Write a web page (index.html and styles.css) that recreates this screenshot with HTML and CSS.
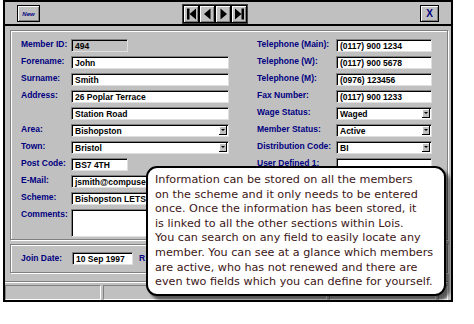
FILE: index.html
```html
<!DOCTYPE html>
<html lang="en">
<head>
  <meta charset="UTF-8" />
  <title>Members</title>
  <link rel="stylesheet" href="styles.css">
</head>
<body>

  <div class="window">
    <!-- Toolbar -->
    <div class="toolbar">
      <button class="btn btn-new">New</button>
      <div class="nav">
        <button class="btn nav-btn"><svg width="11" height="12" viewBox="0 0 11 12"><rect x="1" y="0.5" width="2.5" height="11" fill="#000"/><polygon points="10,0.5 10,11.5 3.5,6" fill="#000"/></svg></button>
        <button class="btn nav-btn"><svg width="11" height="12" viewBox="0 0 11 12"><polygon points="8.5,0.5 8.5,11.5 2,6" fill="#000"/></svg></button>
        <button class="btn nav-btn"><svg width="11" height="12" viewBox="0 0 11 12"><polygon points="2.5,0.5 2.5,11.5 9,6" fill="#000"/></svg></button>
        <button class="btn nav-btn"><svg width="11" height="12" viewBox="0 0 11 12"><polygon points="1,0.5 1,11.5 7.5,6" fill="#000"/><rect x="7.5" y="0.5" width="2.5" height="11" fill="#000"/></svg></button>
      </div>
      <button class="btn btn-close">X</button>
    </div>

    <div class="content">
      <!-- Member details -->
      <div class="panel main-panel">
        <div class="col col-left">
          <span class="label">Member ID:</span><span class="field readonly short">494</span>
          <span class="label">Forename:</span><span class="field">John</span>
          <span class="label">Surname:</span><span class="field">Smith</span>
          <span class="label">Address:</span><span class="field">26 Poplar Terrace</span>
          <span class="label"></span><span class="field">Station Road</span>
          <span class="label">Area:</span><span class="field select">Bishopston<span class="drop"></span></span>
          <span class="label">Town:</span><span class="field select">Bristol<span class="drop"></span></span>
          <span class="label">Post Code:</span><span class="field short">BS7 4TH</span>
          <span class="label">E-Mail:</span><span class="field mid">jsmith@compuserve.com</span>
          <span class="label">Scheme:</span><span class="field mid">Bishopston LETS</span>
          <span class="label">Comments:</span><span class="field memo"></span>
        </div>
        <div class="col col-right">
          <span class="label">Telephone (Main):</span><span class="field">(0117) 900 1234</span>
          <span class="label">Telephone (W):</span><span class="field">(0117) 900 5678</span>
          <span class="label">Telephone (M):</span><span class="field">(0976) 123456</span>
          <span class="label">Fax Number:</span><span class="field">(0117) 900 1233</span>
          <span class="label">Wage Status:</span><span class="field select">Waged<span class="drop"></span></span>
          <span class="label">Member Status:</span><span class="field select">Active<span class="drop"></span></span>
          <span class="label">Distribution Code:</span><span class="field select">BI<span class="drop"></span></span>
          <span class="label">User Defined 1:</span><span class="field"></span>
        </div>
      </div>

      <!-- Dates -->
      <div class="panel join-panel">
        <span class="label join-label">Join Date:</span>
        <span class="field join-field">10 Sep 1997</span>
        <span class="label renew-label">R</span>
      </div>

      <!-- Status bar -->
      <div class="statusbar">
        <span class="cell cell-1"></span>
        <span class="cell cell-2"></span>
        <span class="cell cell-3"></span>
        <span class="cell cell-4"></span>
      </div>
    </div>

    <!-- Help balloon -->
    <div class="tip">
      Information can be stored on all the members<br>
      on the scheme and it only needs to be entered<br>
      once. Once the information has been stored, it<br>
      is linked to all the other sections within Lois.<br>
      You can search on any field to easily locate any<br>
      member. You can see at a glance which members<br>
      are active, who has not renewed and there are<br>
      even two fields which you can define for yourself.
    </div>
  </div>

</body>
</html>
```

FILE: styles.css
```css
body {
  margin: 0;
  background: #fff;
  font-family: "Liberation Sans", Arial, sans-serif;
}

.window {
  position: relative;
  margin-left: 3px;
  width: 450px;
  height: 302px;
  box-sizing: border-box;
  border: 2px solid #000;
  background: #c0c0c0;
}

/* Toolbar */
.toolbar {
  display: flex;
  align-items: flex-start;
  height: 22px;
  border-bottom: 2px solid #000;
  padding-left: 12px;
}

.btn {
  box-sizing: border-box;
  padding: 0;
  margin: 0;
  background: #c0c0c0;
  border: 1px solid #000;
  box-shadow: inset 1px 1px #fff, inset -1px -1px #808080;
  font-family: "Liberation Sans", Arial, sans-serif;
  font-weight: bold;
  display: flex;
  align-items: center;
  justify-content: center;
}

.btn-new {
  margin-top: 3px;
  width: 23px;
  height: 17px;
  font-size: 6px;
  font-style: italic;
  color: #000080;
}

.nav {
  display: flex;
  margin-left: 142px;
  margin-top: 2px;
  border: 1px solid #404040;
}

.nav-btn {
  width: 16px;
  height: 18px;
}

.btn-close {
  margin-left: 172px;
  margin-top: 3px;
  width: 19px;
  height: 17px;
  font-size: 10px;
  color: #000080;
}

/* Panels */
.content {
  padding: 4px 3px 0 5px;
}

.panel {
  border: 1px solid #808080;
  box-shadow: inset 1px 1px #fff, 1px 1px #fff;
}

.main-panel {
  display: flex;
  gap: 28px;
  height: 210px;
  box-sizing: border-box;
  padding: 8px 0 0 10px;
}

.col {
  display: grid;
  grid-auto-rows: 13px;
  row-gap: 4px;
  align-content: start;
}

.col-left {
  grid-template-columns: 50px 158px;
  grid-template-rows: repeat(10, 13px) 28px;
}

.col-right {
  grid-template-columns: 79px 96px;
}

.label {
  color: #000080;
  font-size: 8.5px;
  font-weight: bold;
  line-height: 11px;
  white-space: nowrap;
}

.field {
  position: relative;
  box-sizing: border-box;
  height: 13px;
  background: #fff;
  border: 1px solid;
  border-color: #808080 #dfdfdf #dfdfdf #808080;
  box-shadow: inset 1px 1px #000;
  padding: 1px 0 0 3px;
  font-size: 8.5px;
  font-weight: bold;
  line-height: 11px;
  color: #000;
  white-space: nowrap;
  overflow: hidden;
}

.readonly {
  background: #c0c0c0;
}

.short {
  width: 57px;
}

.mid {
  width: 76px;
}

.memo {
  width: 76px;
  height: 28px;
}

.drop {
  position: absolute;
  right: 1px;
  top: 1px;
  width: 8px;
  height: 9px;
  background: #c0c0c0;
  box-shadow: inset -1px -1px #000, inset 1px 1px #fff;
}

.drop::after {
  content: "";
  position: absolute;
  left: 2px;
  top: 3px;
  border-left: 2px solid transparent;
  border-right: 2px solid transparent;
  border-top: 2px solid #000;
}

.join-panel {
  margin-top: 4px;
  height: 29px;
  box-sizing: border-box;
  display: flex;
  align-items: center;
  padding-left: 10px;
}

.join-label {
  width: 51px;
}

.join-field {
  width: 61px;
}

.renew-label {
  margin-left: 6px;
}

/* Status bar */
.statusbar {
  display: flex;
  gap: 2px;
  margin: 8px 0 0 -5px;
  padding: 3px 0 0 0;
  border-top: 1px solid #808080;
  box-shadow: inset 0 1px #fff;
}

.cell {
  height: 15px;
  box-sizing: border-box;
  border: 1px solid;
  border-color: #808080 #fff #fff #808080;
}

.cell-1 { width: 97px; }
.cell-2 { width: 226px; }
.cell-3 { width: 108px; }
.cell-4 { width: 10px; }

/* Help balloon */
.tip {
  position: absolute;
  left: 141px;
  top: 164px;
  width: 300px;
  height: 130px;
  box-sizing: border-box;
  padding: 5px 0 0 7px;
  background: #fff;
  border: 2px solid #000;
  border-radius: 11px;
  box-shadow: 4px 4px 3px rgba(0, 0, 0, 0.55);
  font-family: "DejaVu Sans", Verdana, sans-serif;
  font-size: 11.2px;
  line-height: 14.6px;
  color: #3d1616;
  white-space: nowrap;
}
```
